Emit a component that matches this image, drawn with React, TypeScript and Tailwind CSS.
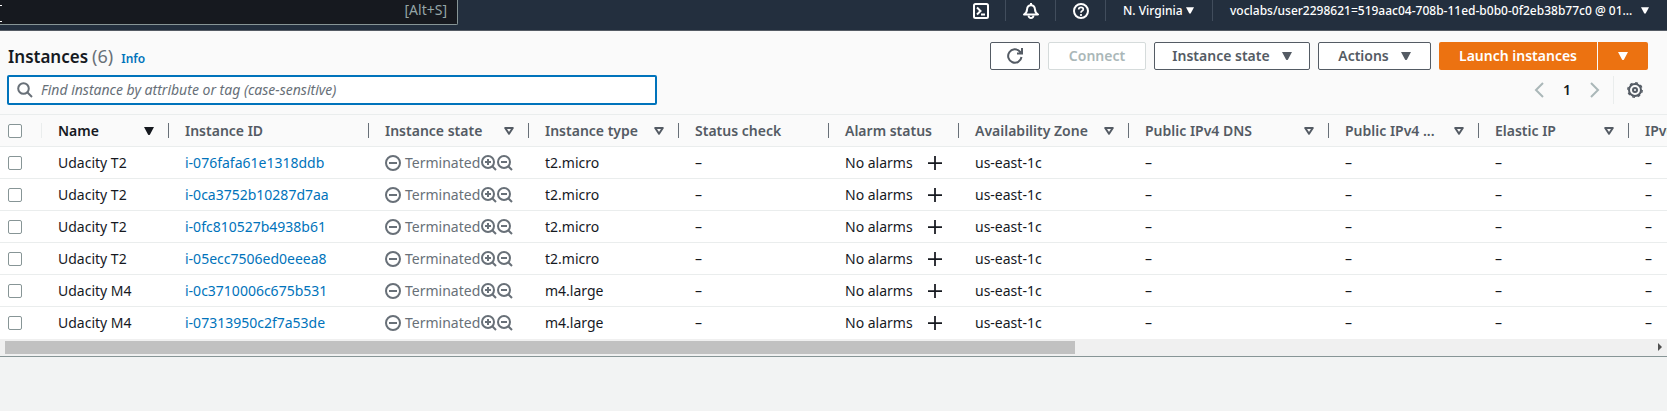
import type { ReactNode } from "react";

type Column = { label: string; width: number; icon?: "sort" | "filter" };

const columns: Column[] = [
  { label: "Name", width: 127, icon: "sort" },
  { label: "Instance ID", width: 200 },
  { label: "Instance state", width: 160, icon: "filter" },
  { label: "Instance type", width: 150, icon: "filter" },
  { label: "Status check", width: 150 },
  { label: "Alarm status", width: 130 },
  { label: "Availability Zone", width: 170, icon: "filter" },
  { label: "Public IPv4 DNS", width: 200, icon: "filter" },
  { label: "Public IPv4 ...", width: 150, icon: "filter" },
  { label: "Elastic IP", width: 150, icon: "filter" },
  { label: "IPv6 IPs", width: 150 },
];

const instances = [
  { name: "Udacity T2", id: "i-076fafa61e1318ddb", type: "t2.micro" },
  { name: "Udacity T2", id: "i-0ca3752b10287d7aa", type: "t2.micro" },
  { name: "Udacity T2", id: "i-0fc810527b4938b61", type: "t2.micro" },
  { name: "Udacity T2", id: "i-05ecc7506ed0eeea8", type: "t2.micro" },
  { name: "Udacity M4", id: "i-0c3710006c675b531", type: "m4.large" },
  { name: "Udacity M4", id: "i-07313950c2f7a53de", type: "m4.large" },
];

function Icon({ children, className = "size-4" }: { children: ReactNode; className?: string }) {
  return (
    <svg
      viewBox="0 0 16 16"
      aria-hidden="true"
      fill="none"
      stroke="currentColor"
      strokeWidth="2"
      className={`shrink-0 ${className}`}
    >
      {children}
    </svg>
  );
}

function Caret({ className = "h-2 w-2.5" }: { className?: string }) {
  return (
    <svg viewBox="0 0 10 8" aria-hidden="true" fill="currentColor" className={`shrink-0 ${className}`}>
      <path d="M0 0h10L6 7.5Q5 8.500 4 7.500Z" />
    </svg>
  );
}

function FilterMark() {
  return (
    <svg viewBox="0 0 10 8" aria-hidden="true" fill="none" stroke="currentColor" strokeWidth="2" className="h-2 w-2.5 shrink-0">
      <path d="M1.200 1h7.600L5 6.800Z" strokeLinejoin="round" />
    </svg>
  );
}

function TopBar() {
  const iconButton = "flex h-full w-[50px] items-center justify-center border-r border-[#414d5c]";
  return (
    <header className="flex h-[31px] items-start justify-between border-b border-[#545b64] bg-[#232f3e] text-white">
      <label className="flex h-[25px] w-[458px] items-center rounded-br-[2px] border-r border-b border-[#879596] bg-[#16191f] pr-2.5 pb-1">
        <span className="mt-1.5 h-[17px] w-0.5 border-y border-white" />
        <input type="search" aria-label="Search" className="min-w-0 flex-1 bg-transparent outline-none" />
        <span className="text-sm leading-5 text-[#95a5a6]">[Alt+S]</span>
      </label>
      <nav className="flex h-[21px] items-center text-xs font-medium">
        <button aria-label="CloudShell" className={iconButton}>
          <Icon>
            <rect x="1" y="1" width="14" height="14" rx="1.500" />
            <path d="M4 4.500 7.500 8 4 11.500M8 11.500h4" />
          </Icon>
        </button>
        <button aria-label="Notifications" className={iconButton}>
          <Icon>
            <path d="M1 11.500Q4 9.500 4 6.500 4.500 2.300 8 2.300t4 4.200Q12 9.500 15 11.500Z" strokeLinejoin="round" />
            <path d="M8 0v2.500M5.500 12.500Q5.800 15 8 15t2.500-2.500" />
          </Icon>
        </button>
        <button aria-label="Help" className={iconButton}>
          <Icon>
            <circle cx="8" cy="8" r="7" />
            <path d="M5.700 6.500Q5.700 4.300 8 4.300t2.300 2Q10.300 7.500 9 8.100 8 8.600 8 9.800M8 11v2" strokeWidth="1.700" />
          </Icon>
        </button>
        <button className="flex h-full w-[107px] items-center justify-between border-r border-[#414d5c] pr-[18px] pl-[17px]">
          N. Virginia
          <Caret className="h-[7px] w-2" />
        </button>
        <button className="flex h-full w-[454px] items-center justify-between pr-[18px] pl-[17px]">
          voclabs/user2298621=519aac04-708b-11ed-b0b0-0f2eb38b77c0 @ 01...
          <Caret className="h-[7px] w-2" />
        </button>
      </nav>
    </header>
  );
}

function Toolbar() {
  const outline =
    "flex h-7 items-center justify-center gap-3 rounded-[2px] border border-[#545b64] bg-white text-sm font-semibold text-[#545b64]";
  return (
    <div className="flex flex-col gap-[5px] border-b border-[#eaeded] bg-[#fafafa] pt-[11px] pr-[19px] pb-[9px] pl-[7px]">
      <div className="flex h-7 items-center justify-between">
        <h1 className="flex items-baseline pl-px text-[17px] leading-6 font-semibold text-[#16191f]">
          Instances
          <span className="ml-1 text-lg leading-6 font-normal text-[#687078]">(6)</span>
          <a href="#info" className="ml-2 text-xs font-semibold text-[#0073bb]">Info</a>
        </h1>
        <div className="flex gap-2">
          <button aria-label="Refresh" className={`${outline} w-[50px]`}>
            <Icon>
              <path d="M14.500 9A6.700 6.700 0 1 1 12.800 3.500L15 5.500M15 0v5.500H10" />
            </Icon>
          </button>
          <button disabled className="h-7 w-[98px] rounded-[2px] border border-[#d5dbdb] bg-white text-sm font-semibold text-[#aab7b8]">
            Connect
          </button>
          <button className={`${outline} w-[156px]`}>
            Instance state
            <Caret />
          </button>
          <button className={`${outline} w-[113px]`}>
            Actions
            <Caret />
          </button>
          <div className="flex gap-px">
            <button className="h-7 w-[158px] rounded-l-[2px] bg-[#ec7211] text-sm font-semibold text-white">Launch instances</button>
            <button aria-label="More launch options" className="flex h-7 w-[50px] items-center justify-center rounded-r-[2px] bg-[#ec7211] text-white">
              <Caret />
            </button>
          </div>
        </div>
      </div>
      <div className="flex items-center justify-between">
        <label className="flex h-[30px] w-[650px] items-center gap-2 rounded-[2px] border-2 border-[#0073bb] bg-white px-2 text-[#687078]">
          <Icon>
            <circle cx="6.500" cy="6.500" r="5.300" />
            <path d="m10.500 10.500 4.500 4.500" />
          </Icon>
          <input
            type="text"
            aria-label="Find instance"
            placeholder="Find instance by attribute or tag (case-sensitive)"
            className="min-w-0 flex-1 bg-transparent text-sm italic outline-none placeholder:text-[#687078]"
          />
        </label>
        <div className="flex h-7 items-center text-[#aab7b8]">
          <button aria-label="Previous page">
            <Icon><path d="M12 1 5 8l7 7" /></Icon>
          </button>
          <button aria-current="page" className="w-10 text-center text-sm font-semibold text-[#16191f]">1</button>
          <button aria-label="Next page">
            <Icon><path d="m4 1 7 7-7 7" /></Icon>
          </button>
          <span className="mr-[13px] ml-2.5 h-7 w-px bg-[#eaeded]" />
          <button aria-label="Preferences" className="mr-[5px] text-[#545b64]">
            <Icon>
              <circle cx="8" cy="8" r="6" />
              <circle cx="8" cy="8" r="7.200" strokeWidth="1.400" strokeDasharray="2.800 2.855" />
              <circle cx="8" cy="8" r="2" />
            </Icon>
          </button>
        </div>
      </div>
    </div>
  );
}

function Check({ label }: { label: string }) {
  return (
    <input
      type="checkbox"
      aria-label={label}
      className="block size-3.5 appearance-none rounded-[2px] border border-[#879596] bg-white"
    />
  );
}

function Cell({ children }: { children: ReactNode }) {
  return <td className="px-4 pt-px pb-0">{children}</td>;
}

function InstanceTable() {
  return (
    <div className="overflow-hidden bg-white">
      <table className="w-[1779px] table-fixed border-collapse text-left text-sm whitespace-nowrap text-[#16191f]">
        <colgroup>
          <col className="w-[42px]" />
          {columns.map((c) => (
            <col key={c.label} style={{ width: c.width }} />
          ))}
        </colgroup>
        <thead>
          <tr className="h-[31px] border-b border-[#eaeded] bg-[#fafafa] text-[#545b64]">
            <th className="px-0 pt-px pb-0">
              <div className="flex h-[15px] items-center border-r border-[#eaeded] pl-2">
                <Check label="Select all instances" />
              </div>
            </th>
            {columns.map((c) => (
              <th key={c.label} className="px-0 pt-px pb-0 font-semibold">
                <div
                  className={`flex h-[15px] items-center justify-between border-r border-[#687078] pr-3.5 pl-4 ${c.icon === "sort" ? "text-[#16191f]" : ""}`}
                >
                  {c.label}
                  {c.icon === "sort" && <Caret />}
                  {c.icon === "filter" && <FilterMark />}
                </div>
              </th>
            ))}
          </tr>
        </thead>
        <tbody>
          {instances.map((row) => (
            <tr key={row.id} className="h-8 border-b border-[#eaeded] last:border-white">
              <td className="pt-px pr-0 pb-0 pl-2">
                <Check label={`Select ${row.id}`} />
              </td>
              <Cell>{row.name}</Cell>
              <Cell>
                <a href={`#${row.id}`} className="text-[#0073bb]">{row.id}</a>
              </Cell>
              <Cell>
                <div className="flex items-center text-[#687078]">
                  <Icon>
                    <circle cx="8" cy="8" r="7" />
                    <path d="M4 8h8" />
                  </Icon>
                  <span className="ml-1">Terminated</span>
                  <button aria-label="Add filter" className="ml-px">
                    <Icon>
                      <circle cx="7" cy="7" r="6" />
                      <path d="M4 7h6M7 4v6M11 11l4 4" />
                    </Icon>
                  </button>
                  <button aria-label="Exclude filter">
                    <Icon>
                      <circle cx="7" cy="7" r="6" />
                      <path d="M4 7h6M11 11l4 4" />
                    </Icon>
                  </button>
                </div>
              </Cell>
              <Cell>{row.type}</Cell>
              <Cell>–</Cell>
              <Cell>
                <div className="flex items-center justify-between pr-px">
                  No alarms
                  <button aria-label="Create alarm">
                    <Icon className="size-3.5"><path d="M8 0v16M0 8h16" /></Icon>
                  </button>
                </div>
              </Cell>
              <Cell>us-east-1c</Cell>
              <Cell>–</Cell>
              <Cell>–</Cell>
              <Cell>–</Cell>
              <Cell>–</Cell>
            </tr>
          ))}
        </tbody>
      </table>
    </div>
  );
}

export default function App() {
  return (
    <div className="min-h-screen overflow-hidden bg-[#f2f3f3] font-['Noto_Sans',sans-serif]">
      <TopBar />
      <main className="border-b border-[#879596]">
        <Toolbar />
        <InstanceTable />
        <div className="flex h-[17px] items-center justify-between bg-[#f0f0f0] pr-[5px] pl-[5px]">
          <div className="h-[13px] w-[64.6%] bg-[#c1c1c1]" />
          <button aria-label="Scroll right" className="text-[#505050]">
            <svg viewBox="0 0 4 8" aria-hidden="true" fill="currentColor" className="h-2 w-1">
              <path d="m0 0 4 4-4 4Z" />
            </svg>
          </button>
        </div>
      </main>
    </div>
  );
}
